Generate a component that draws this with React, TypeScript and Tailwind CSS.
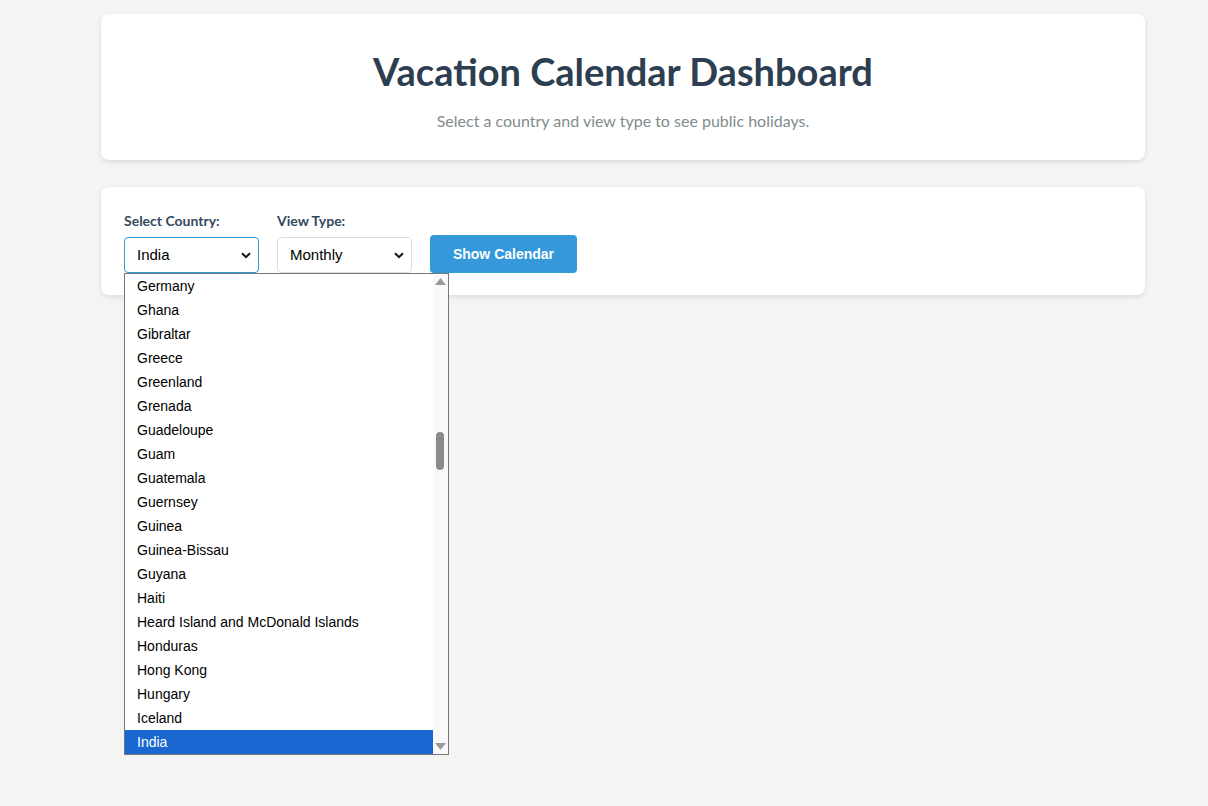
import React from "react";

const countries = [
  "Germany","Ghana","Gibraltar","Greece","Greenland","Grenada","Guadeloupe","Guam","Guatemala","Guernsey","Guinea","Guinea-Bissau","Guyana","Haiti","Heard Island and McDonald Islands","Honduras","Hong Kong","Hungary","Iceland","India",
];

function Chevron() {
  return (
    <svg width="10" height="7" viewBox="0 0 10 7" className="shrink-0">
      <path d="M1 1.2 L5 5.2 L9 1.2" fill="none" stroke="#111" strokeWidth="2" />
    </svg>
  );
}

export default function App() {
  return (
    <div className="min-h-[806px] w-full bg-[#f4f4f4] pt-[14px]" style={{ fontFamily: "'Open Sans', sans-serif" }}>
      <div className="ml-[101px] w-[1044px] flex flex-col gap-[27px]">
        <div className="bg-white rounded-lg shadow-[0_2px_5px_rgba(0,0,0,0.1)] h-[146px] flex flex-col items-center pt-[44px]">
          <h1 className="text-[38px] font-bold leading-[26px] text-[#2c3e50]" style={{ fontFamily: "Lato, sans-serif" }}>
            Vacation Calendar Dashboard
          </h1>
          <p className="mt-[27px] text-[16px] leading-[20px] text-[#7f8c8d]" style={{ fontFamily: "Lato, sans-serif" }}>
            Select a country and view type to see public holidays.
          </p>
        </div>
        <div className="relative bg-white rounded-lg shadow-[0_2px_5px_rgba(0,0,0,0.1)] h-[108px] pl-[23px] pt-[26px] flex items-end gap-[18px] pb-[22px]">
          <div className="flex flex-col gap-[8px] relative">
            <label className="text-[14px] font-bold leading-[16px] text-[#34495e]" style={{ fontFamily: "Lato, sans-serif" }}>Select Country:</label>
            <div className="w-[135px] h-[36px] border border-[#3498db] rounded-[4px] flex items-center justify-between pl-[12px] pr-[7px] text-[15px] text-black" style={{ fontFamily: "'Liberation Sans', Arial, sans-serif" }}>
              <span>India</span>
              <Chevron />
            </div>
            <div className="absolute left-0 top-[60px] z-10 w-[325px] h-[482px] bg-white border border-[#767676] flex" style={{ fontFamily: "'Liberation Sans', Arial, sans-serif" }}>
              <div className="flex-1 flex flex-col">
                {countries.map((c) => (
                  <div
                    key={c}
                    className={
                      "h-[24px] flex items-center pl-[12px] text-[14px] " +
                      (c === "India" ? "bg-[#1a67d2] text-white" : "text-black")
                    }
                  >
                    {c}
                  </div>
                ))}
              </div>
              <div className="relative w-[15px] bg-[#f9f9f9] flex flex-col items-center justify-between py-[3px]">
                <svg width="11" height="8" viewBox="0 0 11 8"><path d="M0 8 L5.5 1 L11 8 Z" fill="#9a9a9a" /></svg>
                <div className="absolute left-[3px] top-[158px] w-[8px] h-[38px] rounded-full bg-[#8a8a8a]" />
                <svg width="11" height="8" viewBox="0 0 11 8"><path d="M0 0 L11 0 L5.5 7 Z" fill="#9a9a9a" /></svg>
              </div>
            </div>
          </div>
          <div className="flex flex-col gap-[8px]">
            <label className="text-[14px] font-bold leading-[16px] text-[#34495e]" style={{ fontFamily: "Lato, sans-serif" }}>View Type:</label>
            <div className="w-[135px] h-[36px] border border-[#dddddd] rounded-[4px] flex items-center justify-between pl-[12px] pr-[7px] text-[15px] text-black" style={{ fontFamily: "'Liberation Sans', Arial, sans-serif" }}>
              <span>Monthly</span>
              <Chevron />
            </div>
          </div>
          <button className="w-[147px] h-[38px] rounded-[4px] bg-[#3498db] text-white text-[14px] font-bold" style={{ fontFamily: "'Liberation Sans', Arial, sans-serif" }}>
            Show Calendar
          </button>
        </div>
      </div>
    </div>
  );
}
